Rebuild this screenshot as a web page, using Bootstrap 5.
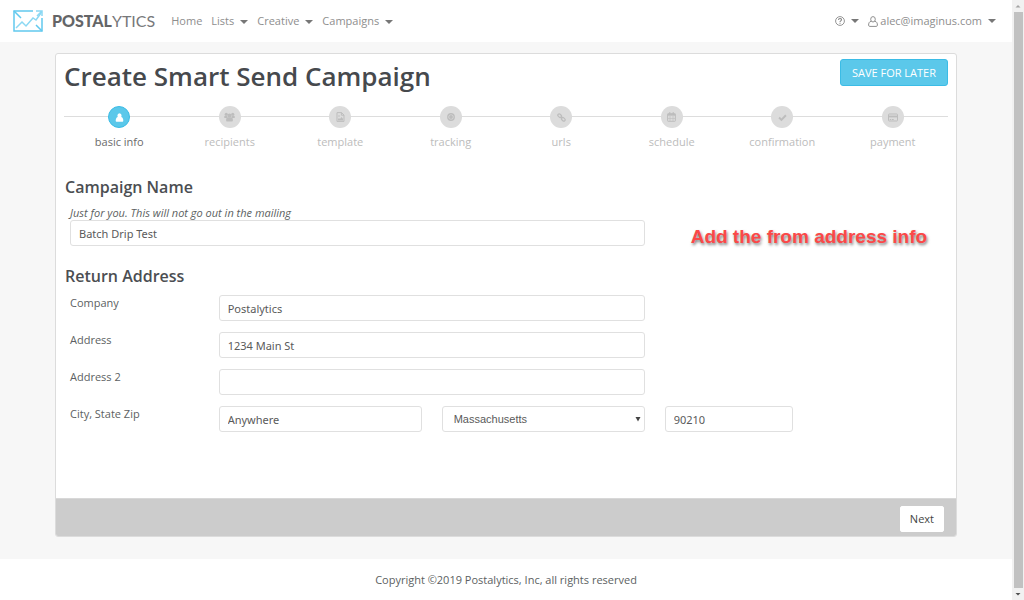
<!DOCTYPE html>
<html lang="en">
<head>
<meta charset="utf-8">
<meta name="viewport" content="width=device-width, initial-scale=1">
<title>Create Smart Send Campaign - Postalytics</title>
<link href="https://cdn.jsdelivr.net/npm/bootstrap@5.3.0/dist/css/bootstrap.min.css" rel="stylesheet">
<style>
  body { font-family: "Open Sans", "Noto Sans", sans-serif; font-size: 11px; line-height: 16px; color: #5c5f62; background: #fff; }
  .page-main { background: #f7f7f7; min-width: 0; }
  .top-bar { background: #fff; min-height: 42px; padding: 0 12px; }
  .brand-name { font-family: Lato, sans-serif; font-size: 16px; color: #77787a; line-height: 20px; }
  .brand-name b { font-weight: 900; color: #646567; }
  .top-bar nav { gap: 9px; }
  .top-bar .nav-link { padding: 0; color: #8e8e8e; font-size: 11px; line-height: 16px; }
  .top-bar .dropdown-toggle::after { margin-left: 6px; border-width: 4px 4px 0 4px; vertical-align: 1px; color: #777; }
  .user-icon { margin-right: 2px; }
  .page-body { padding: 11px 55px 21px; }
  .wizard { background: #fff; border: 1px solid #dcdcdc; border-radius: 3px; }
  .wizard h1 { font-size: 26px; line-height: 34px; font-weight: 600; color: #46494d; }
  .wizard h2 { font-size: 16px; line-height: 20px; font-weight: 600; color: #4b4e52; }
  .wizard-head { padding: 5px 8px 0; }
  .btn-save { font-size: 11px; line-height: 17px; padding: 4px 11px; border-radius: 3px; color: #fff; background: #5bc8ea; border: 1px solid #3bbce6; }
  .steps { margin: 13px 8px 0; position: relative; }
  .steps::before { content: ""; position: absolute; left: 0; right: 0; top: 10px; height: 1px; background: #ddd; }
  .steps li { flex: 1 1 0; text-align: center; color: #bcbcbc; }
  .step-dot { position: relative; width: 22px; height: 22px; border-radius: 50%; background: #dcdcdc; color: #bdbdbd; margin: 0 auto 6px; }
  .steps .current { color: #6b6b6b; }
  .current .step-dot { background: #5bc8ea; color: #fff; border: 1px solid #3bbce6; }
  .form-area { padding: 27px 14px 66px; }
  .form-area h2 { margin: 0 -5px; }
  .form-area .row { --bs-gutter-x: 20px; --bs-gutter-y: 0; }
  .form-area .form-control, .form-area .form-select {
    min-height: 26px; height: 26px; padding: 0 8px; font-size: 11px; line-height: 16px; color: #5a5a5a;
    border: 1px solid #e0e0e0; border-radius: 3px; background-color: #fff; }
  .form-area .form-control { font-family: "Noto Sans", sans-serif; }
  .form-area .form-select { font-family: "Liberation Sans", sans-serif; padding-left: 11px;
    background-image: url("data:image/svg+xml,%3Csvg xmlns='http://www.w3.org/2000/svg' viewBox='0 0 6 6'%3E%3Cpath d='M.5 1h5L3 5.500z' fill='%23444'/%3E%3C/svg%3E");
    background-size: 6px 6px; background-position: right 3px center; }
  .address-rows { display: grid; row-gap: 11px; padding-top: 9px; }
  .address-rows label { line-height: 14px; }
  .hint { font-style: italic; line-height: 15px; }
  .callout-note { font-family: "Liberation Sans", sans-serif; font-weight: 700; font-size: 19px; line-height: 18px; color: #fb4848; text-shadow: 1px 2px 3px rgba(0,0,0,.5); padding-left: 36px !important; }
  .wizard-foot { background: #ccc; border-top: 1px solid #d8d8d8; padding: 7px 12px 4px; border-radius: 0 0 2px 2px; }
  .btn-next { font-size: 11px; line-height: 16px; padding: 4px 9px; border-radius: 2px; background: #fff; color: #444; border: 1px solid #fff; }
  .page-foot { background: #fff; padding: 13px 0 12px; }
  .scroll-rail { width: 12px; height: 100vh; top: 0; background: #f1f1f1; }
  .scroll-thumb { background: #c1c1c1; width: 9px; }
</style>
</head>
<body>
<div class="d-flex">
  <div class="page-main flex-grow-1 d-flex flex-column min-vh-100">
    <header class="top-bar d-flex align-items-center">
      <a href="#" class="d-flex align-items-center text-decoration-none me-3" aria-label="Postalytics">
        <svg class="me-2" width="32" height="24" viewBox="0 0 32 24" fill="none" stroke="#62c9ee" stroke-width="1.500">
          <path d="M21 2H2v20h28V9"/><path d="M2 2l7 7M30 22l-6-6"/>
          <path d="M4 19l6-6 4 4 7-8 3 2 5-7" stroke="#8bd8f3"/><path d="M24 2h6v5M30 2l-5 5" stroke="#8bd8f3"/>
        </svg>
        <span class="brand-name"><b>POSTAL</b>YTICS</span>
      </a>
      <nav class="d-flex">
        <a class="nav-link" href="#">Home</a>
        <a class="nav-link dropdown-toggle" href="#">Lists</a>
        <a class="nav-link dropdown-toggle" href="#">Creative</a>
        <a class="nav-link dropdown-toggle" href="#">Campaigns</a>
      </nav>
      <nav class="d-flex ms-auto pe-1">
        <a class="nav-link dropdown-toggle d-flex align-items-center" href="#" aria-label="Help">
          <svg width="10" height="10" viewBox="0 0 10 10" fill="none" stroke="#888"><circle cx="5" cy="5" r="4.400" stroke-width=".9"/><path d="M3.500 4c0-2 3-2 3-.2C6.500 5 5 4.800 5 6M5 6.800v1" stroke-width="1.100"/></svg></a>
        <a class="nav-link dropdown-toggle d-flex align-items-center" href="#">
          <svg class="user-icon" width="10" height="11" viewBox="0 0 10 11" fill="none" stroke="#8e8e8e"><path d="M3.300 5.300C1 5.500.6 7.500.6 9.200c0 .8.500 1.200 1.200 1.200h6.400c.7 0 1.200-.4 1.200-1.200 0-1.700-.4-3.700-2.700-3.900"/><ellipse cx="5" cy="3.300" rx="2.300" ry="2.700"/></svg>alec@imaginus.com</a>
      </nav>
    </header>

    <main class="page-body flex-grow-1">
      <form class="wizard">
        <div class="wizard-head d-flex justify-content-between align-items-start">
          <h1 class="mb-0">Create Smart Send Campaign</h1>
          <button type="button" class="btn btn-save">SAVE FOR LATER</button>
        </div>
        <ol class="steps list-unstyled d-flex mb-0">
          <li class="current"><div class="step-dot d-flex align-items-center justify-content-center"><svg width="9" height="9" viewBox="0 0 10 10" fill="currentColor"><ellipse cx="5" cy="3" rx="2.300" ry="2.800"/><path d="M3 4.500C1.300 5 .8 7 .8 8.500c0 .8.500 1.300 1.200 1.300h6c.7 0 1.200-.5 1.200-1.300C9.200 7 8.700 5 7 4.500z"/></svg></div>basic info</li>
          <li><div class="step-dot d-flex align-items-center justify-content-center"><svg width="11" height="10" viewBox="0 0 12 10" fill="currentColor"><circle cx="2.500" cy="2" r="1.700"/><circle cx="9.500" cy="2" r="1.700"/><circle cx="6" cy="3.400" r="2.200"/><path d="M.3 6V4.500C.3 3 3 3 4 4.500L3 6zM11.700 6V4.500C11.700 3 9 3 8 4.500L9 6zM2.300 8.500c0-2 .7-3.200 1.900-3.200h3.600c1.200 0 1.900 1.200 1.900 3.200 0 1-.5 1.300-1.200 1.300h-5c-.7 0-1.200-.3-1.200-1.300z"/></svg></div>recipients</li>
          <li><div class="step-dot d-flex align-items-center justify-content-center"><svg width="9" height="10" viewBox="0 0 9 10" fill="none" stroke="currentColor"><path d="M1 .6h4.500L8 3v6.400H1zM5.400.6v2.600H8"/><path d="M2 8.500V7l1-1 1 1 1.500-2L7 6.700v1.800z" fill="currentColor" stroke="none"/><circle cx="3" cy="4" r=".8" fill="currentColor" stroke="none"/></svg></div>template</li>
          <li><div class="step-dot d-flex align-items-center justify-content-center"><svg width="8" height="8" viewBox="0 0 10 10" fill="none" stroke="currentColor"><circle cx="5" cy="5" r="4" stroke-width="1.700"/><circle cx="5" cy="5" r="2.400" fill="currentColor" stroke="none"/></svg></div>tracking</li>
          <li><div class="step-dot d-flex align-items-center justify-content-center"><svg width="9" height="9" viewBox="0 0 10 10" fill="none" stroke="currentColor" stroke-width="1.300"><rect x="-2.300" y="-1.500" width="4.600" height="3" rx="1.500" transform="translate(3 3) rotate(45)"/><rect x="-2.300" y="-1.500" width="4.600" height="3" rx="1.500" transform="translate(7 7) rotate(45)"/><path d="M4 4l2 2"/></svg></div>urls</li>
          <li><div class="step-dot d-flex align-items-center justify-content-center"><svg width="9" height="10" viewBox="0 0 9 10" fill="none" stroke="currentColor"><rect x=".6" y="1.700" width="7.800" height="7.600" rx=".6"/><path d="M.6 2.700h7.800" stroke-width="2"/><path d="M2.700.2v2M6.300.2v2" stroke-width="1.400"/><path d="M3 4v5M6 4v5M1 6.500h7" stroke-width=".6"/></svg></div>schedule</li>
          <li><div class="step-dot d-flex align-items-center justify-content-center"><svg width="9" height="9" viewBox="0 0 10 10" fill="none" stroke="currentColor" stroke-width="2.200"><path d="M1.200 5l2.600 2.700 5-5.200"/></svg></div>confirmation</li>
          <li><div class="step-dot d-flex align-items-center justify-content-center"><svg width="10" height="9" viewBox="0 0 10 9" fill="none" stroke="currentColor"><rect x=".5" y="1" width="9" height="7" rx=".7"/><path d="M.5 3.500h9" stroke-width="1.800"/><path d="M1.700 6.500h1.300M3.700 6.500h2"/></svg></div>payment</li>
        </ol>

        <div class="form-area">
          <h2><label for="campaign">Campaign Name</label></h2>
          <div class="row align-items-end pt-2">
            <div class="col-8">
              <div class="hint" id="campaignHint">Just for you. This will not go out in the mailing</div>
              <input class="form-control" id="campaign" type="text" value="Batch Drip Test" aria-describedby="campaignHint">
            </div>
            <div class="col-4 callout-note">Add the from address info</div>
          </div>
          <h2 class="pt-3 mt-1">Return Address</h2>
          <div class="address-rows">
            <div class="row">
              <div class="col-2"><label for="company">Company</label></div>
              <div class="col-6"><input class="form-control" id="company" type="text" value="Postalytics"></div>
            </div>
            <div class="row">
              <div class="col-2"><label for="address">Address</label></div>
              <div class="col-6"><input class="form-control" id="address" type="text" value="1234 Main St"></div>
            </div>
            <div class="row">
              <div class="col-2"><label for="address2">Address 2</label></div>
              <div class="col-6"><input class="form-control" id="address2" type="text"></div>
            </div>
            <div class="row">
              <div class="col-2"><label for="city">City, State Zip</label></div>
              <div class="col-3"><input class="form-control" id="city" type="text" value="Anywhere"></div>
              <div class="col-3"><select class="form-select" aria-label="State"><option>Massachusetts</option></select></div>
              <div class="col-2"><input class="form-control" type="text" value="90210" aria-label="Zip"></div>
            </div>
          </div>
        </div>
        <div class="wizard-foot d-flex justify-content-end">
          <button type="button" class="btn btn-next">Next</button>
        </div>
      </form>
    </main>
    <footer class="page-foot text-center">Copyright ©2019 Postalytics, Inc, all rights reserved</footer>
  </div>
  <div class="scroll-rail sticky-top flex-shrink-0 d-flex flex-column align-items-center" aria-hidden="true">
    <svg width="12" height="12" viewBox="0 0 12 12"><path d="M3.500 7.500h5L6 5z" fill="#a3a3a3"/></svg>
    <div class="scroll-thumb flex-grow-1"></div>
    <svg width="12" height="12" viewBox="0 0 12 12"><path d="M3.500 5h5L6 7.500z" fill="#505050"/></svg>
  </div>
</div>
<script src="https://cdn.jsdelivr.net/npm/bootstrap@5.3.0/dist/js/bootstrap.bundle.min.js"></script>
</body>
</html>
